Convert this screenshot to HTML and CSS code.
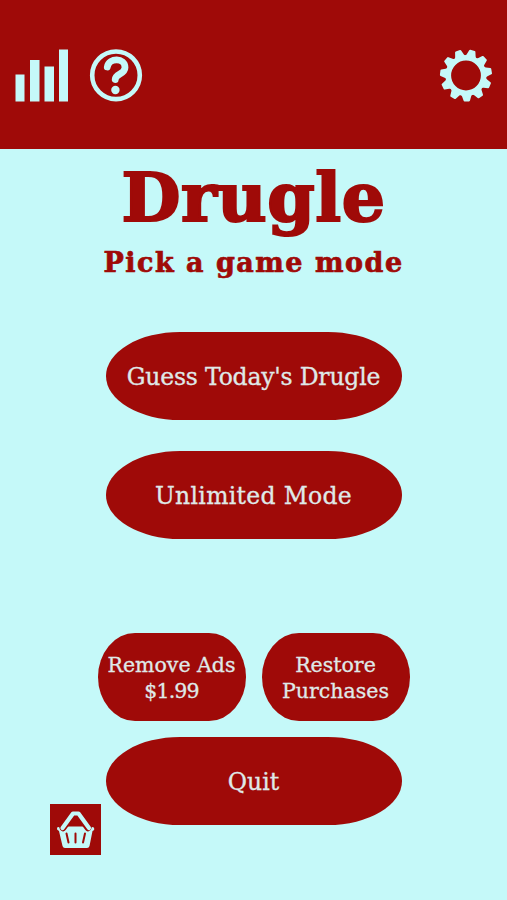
FILE: index.html
```html
<!DOCTYPE html>
<html lang="en">
<head>
<meta charset="utf-8">
<title>Drugle</title>
<link rel="stylesheet" href="styles.css">
</head>
<body>
<header class="bar">
  <svg class="icon" viewBox="0 0 52 52"><path d="M.5 25.500h9V52.500h-9zM15 11h9.500v41.500H15zM29.500 17.500H39v35h-9.500zM44 .5h9v52h-9z"/></svg>
  <svg class="icon help" viewBox="0 0 52 52"><circle class="line ring" cx="26" cy="26.300" r="23.800"/><path class="line mark" d="M17.300 18C19 8.500 35 8.500 35 18.500C35 25.500 25.500 24.500 25.200 30.500"/><circle cx="25.400" cy="41" r="4.200"/></svg>
  <svg class="icon gear" viewBox="-26 -26.500 52 52">
    <defs><path id="tooth" d="M-5.400-19L-4.500-21L-3.200-25.200Q-3-26-2.200-26H2.200Q3-26 3.200-25.200L4.500-21L5.400-19z"/></defs>
    <circle class="line rim" r="17.700"/>
    <g transform="rotate(14.500)">
      <use href="#tooth"/><use href="#tooth" transform="rotate(32.727)"/><use href="#tooth" transform="rotate(65.455)"/><use href="#tooth" transform="rotate(98.182)"/><use href="#tooth" transform="rotate(130.909)"/><use href="#tooth" transform="rotate(163.636)"/><use href="#tooth" transform="rotate(196.364)"/><use href="#tooth" transform="rotate(229.091)"/><use href="#tooth" transform="rotate(261.818)"/><use href="#tooth" transform="rotate(294.545)"/><use href="#tooth" transform="rotate(327.273)"/>
    </g>
  </svg>
</header>
<main class="menu">
  <h1 class="title">Drugle</h1>
  <h2 class="subtitle">Pick a game mode</h2>
  <button class="pill today"><span>Guess Today's Drugle</span></button>
  <button class="pill unlimited"><span>Unlimited Mode</span></button>
  <div class="pair">
    <button class="pill small remove"><span>Remove Ads</span><span class="price">$1.99</span></button>
    <button class="pill small restore"><span>Restore</span><span class="purchases">Purchases</span></button>
  </div>
  <button class="pill quit"><span>Quit</span></button>
</main>
<button class="shop" aria-label="Shop">
  <svg viewBox="0 0 51 51">
    <path d="M7 24Q8 22 10 24Q12 26 15 22.500H35Q38 26 41 24Q43 22 44 24Q45 26 42.500 27L39.500 42Q39 44 37 44H15Q13 44 12.500 42L9 27Q6.500 26 7 24z"/>
    <path class="gap" d="M13 24L23.500 10M38 24L27.500 10"/>
    <path class="handle" d="M12.500 24L23 9.500H28.500L39 24"/>
    <path class="slot" d="M16.500 29.500L18.500 38.500M25.500 29.500V38.500M35 29.500L33 38.500"/>
  </svg>
</button>
</body>
</html>
```
FILE: styles.css
```css
* { box-sizing: border-box; }
body {
  margin: 0;
  width: 507px;
  height: 900px;
  overflow: hidden;
  background: #c5f9f9;
  color: #9f0a08;
  font-family: Rockwell, "DejaVu Serif", serif;
}
.bar {
  display: flex;
  align-items: flex-start;
  height: 149px;
  padding: 49px 15px 0;
  background: #9f0a08;
}
.icon { width: 52px; height: 52px; fill: #c5f9f9; overflow: visible; }
.help { margin-left: 23px; }
.gear { margin-left: auto; }
.line { fill: none; stroke: #c5f9f9; }
.ring { stroke-width: 4.600px; }
.mark { stroke-width: 6.800px; stroke-linecap: round; }
.rim { stroke-width: 5.600px; }
.menu { display: flex; flex-direction: column; align-items: center; }
.title {
  margin: 6px 0 0;
  height: 91px;
  font-size: 68px;
  line-height: 84px;
  letter-spacing: 0.500px;
  white-space: nowrap;
  -webkit-text-stroke: 2.200px #9f0a08;
}
.subtitle {
  margin: 0;
  height: 34px;
  font-size: 27px;
  line-height: 34px;
  letter-spacing: 1.500px;
  white-space: nowrap;
  -webkit-text-stroke: 0.700px #9f0a08;
}
button { border: 0; padding: 0; font: inherit; }
.pill {
  display: flex;
  flex-direction: column;
  align-items: center;
  justify-content: center;
  width: 296px;
  height: 88px;
  padding-top: 2px;
  border-radius: 25% / 50%;
  background: #9f0a08;
  color: #dfe9e8;
  font-size: 23.500px;
  line-height: 26px;
  white-space: nowrap;
  -webkit-text-stroke: 0.300px #dfe9e8;
}
.today { margin-top: 52px; letter-spacing: -0.200px; }
.unlimited { margin-top: 31px; letter-spacing: 0.300px; }
.pair { display: flex; gap: 16px; margin-top: 94px; }
.small { width: 148px; font-size: 20.500px; }
.price { letter-spacing: -0.800px; }
.quit { margin-top: 16px; }
.shop {
  position: absolute;
  left: 50px;
  top: 804px;
  width: 51px;
  height: 51px;
  background: #9f0a08;
}
.shop svg { display: block; width: 51px; height: 51px; fill: #c5f9f9; }
.gap, .handle, .slot { fill: none; stroke-linecap: round; stroke-linejoin: round; }
.gap { stroke: #9f0a08; stroke-width: 6.500px; }
.handle { stroke: #c5f9f9; stroke-width: 4.200px; }
.slot { stroke: #9f0a08; stroke-width: 2px; }
```
